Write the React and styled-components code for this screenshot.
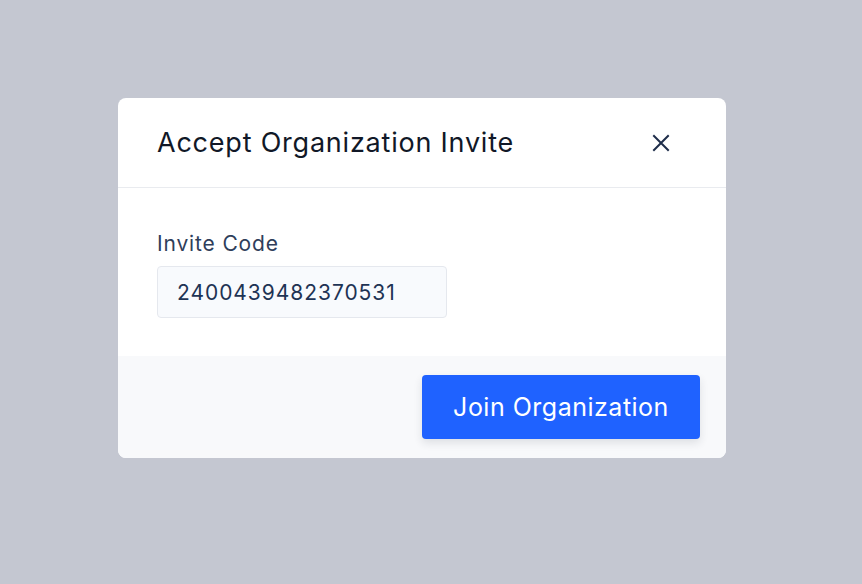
import React from "react";
import styled, { createGlobalStyle } from "styled-components";

const Global = createGlobalStyle`
  html, body { margin: 0; padding: 0; }
  body {
    background: #c4c7d1;
    font-family: Inter, "Noto Sans", sans-serif;
    -webkit-font-smoothing: antialiased;
  }
`;

const Screen = styled.div`
  width: 862px;
  height: 584px;
  display: flex;
  justify-content: flex-start;
  align-items: flex-start;
  padding: 98px 0 0 118px;
  box-sizing: border-box;
`;

const Dialog = styled.div`
  width: 608px;
  background: #ffffff;
  border-radius: 8px;
  overflow: hidden;
  display: flex;
  flex-direction: column;
`;

const Header = styled.div`
  height: 90px;
  box-sizing: border-box;
  display: flex;
  align-items: center;
  justify-content: space-between;
  padding: 0 53px 0 39px;
  border-bottom: 1px solid #e9ebef;
`;

const Title = styled.h2`
  margin: 0;
  font-size: 27px;
  font-weight: 400;
  color: #111827;
  letter-spacing: 0.78px;
`;

const CloseButton = styled.button`
  border: none;
  background: none;
  padding: 0;
  width: 24px;
  height: 24px;
  display: flex;
  align-items: center;
  justify-content: center;
  color: #1e2d4a;
  cursor: pointer;
`;

const Body = styled.div`
  padding: 44px 39px 38px;
  display: flex;
  flex-direction: column;
  gap: 10px;
`;

const Label = styled.label`
  font-size: 21px;
  color: #2f3e5b;
  line-height: 24px;
  letter-spacing: 0.85px;
`;

const Input = styled.input`
  width: 290px;
  height: 52px;
  box-sizing: border-box;
  border: 1px solid #e5e8ee;
  border-radius: 4px;
  background: #f8fafd;
  padding: 0 19px;
  font-family: inherit;
  font-size: 21px;
  letter-spacing: 0.95px;
  color: #1e3354;
  outline: none;
`;

const Footer = styled.div`
  background: #f8f9fb;
  padding: 19px 26px 19px;
  display: flex;
  justify-content: flex-end;
`;

const PrimaryButton = styled.button`
  width: 278px;
  height: 64px;
  border: none;
  border-radius: 4px;
  background: #1f62ff;
  color: #ffffff;
  font-family: inherit;
  font-size: 25px;
  letter-spacing: 0.5px;
  box-shadow: 0 4px 8px rgba(30, 41, 59, 0.12);
  cursor: pointer;
`;

export default function App() {
  return (
    <>
      <Global />
      <Screen>
        <Dialog>
          <Header>
            <Title>Accept Organization Invite</Title>
            <CloseButton aria-label="Close">
              <svg width="18" height="18" viewBox="0 0 18 18" fill="none">
                <path d="M2 2L16 16M16 2L2 16" stroke="currentColor" strokeWidth="2" strokeLinecap="square" />
              </svg>
            </CloseButton>
          </Header>
          <Body>
            <Label>Invite Code</Label>
            <Input defaultValue="2400439482370531" readOnly />
          </Body>
          <Footer>
            <PrimaryButton>Join Organization</PrimaryButton>
          </Footer>
        </Dialog>
      </Screen>
    </>
  );
}
